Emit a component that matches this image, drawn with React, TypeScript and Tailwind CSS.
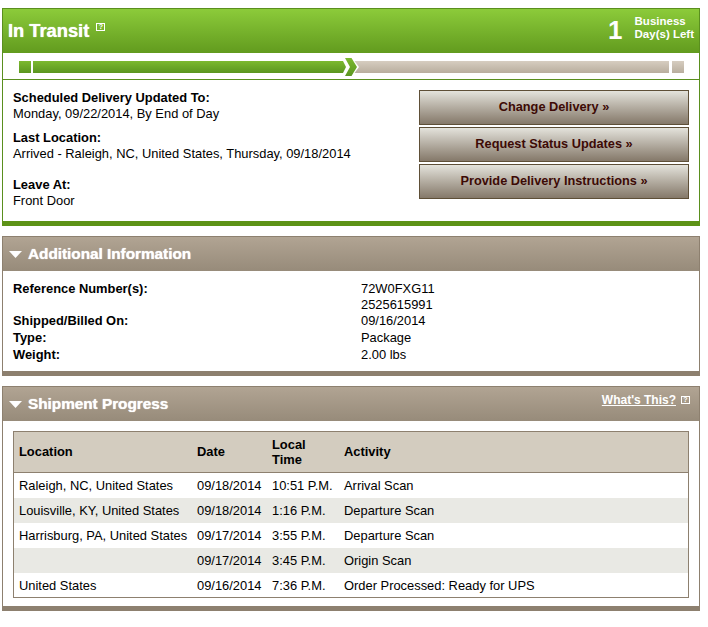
const rows = [
  { location: "Raleigh, NC, United States", date: "09/18/2014", time: "10:51 P.M.", activity: "Arrival Scan" },
  { location: "Louisville, KY, United States", date: "09/18/2014", time: "1:16 P.M.", activity: "Departure Scan" },
  { location: "Harrisburg, PA, United States", date: "09/17/2014", time: "3:55 P.M.", activity: "Departure Scan" },
  { location: "", date: "09/17/2014", time: "3:45 P.M.", activity: "Origin Scan" },
  { location: "United States", date: "09/16/2014", time: "7:36 P.M.", activity: "Order Processed: Ready for UPS" },
];

function HelpIcon() {
  return (
    <span className="inline-flex h-[8px] w-[9px] items-center justify-center border border-white text-[7px] leading-none font-bold text-white">
      ?
    </span>
  );
}

function Triangle() {
  return (
    <svg width="13" height="7" viewBox="0 0 13 7" className="shrink-0">
      <path d="M0 0H13L6.5 7Z" fill="#fff" />
    </svg>
  );
}

function Chevron() {
  return (
    <svg width="18" height="18" viewBox="0 0 18 18" className="shrink-0">
      <defs>
        <linearGradient id="beige" x1="0" y1="0" x2="0" y2="1">
          <stop offset="0" stopColor="#d6cdc0" />
          <stop offset="1" stopColor="#b9ae9e" />
        </linearGradient>
        <linearGradient id="green" x1="0" y1="0" x2="0" y2="1">
          <stop offset="0" stopColor="#7cb92f" />
          <stop offset="1" stopColor="#5b9620" />
        </linearGradient>
      </defs>
      <path d="M0 3L3 9L0 15Z" fill="url(#green)" />
      <path d="M2 0H8.5L14 9L8.5 18H2L7 9Z" fill="url(#green)" />
      <path d="M11.5 3H18V15H11.5L16 9Z" fill="url(#beige)" />
    </svg>
  );
}

function ActionButton({ label }: { label: string }) {
  return (
    <button className="h-[35px] w-[270px] border border-[#5e4f37] bg-gradient-to-b from-[#e4e3dc] to-[#85796a] pb-[2px] text-[12.75px] font-bold text-[#3d0a05]">
      {label} »
    </button>
  );
}

function SectionHeader({ title, right }: { title: string; right?: boolean }) {
  return (
    <div className="flex h-[34px] items-center justify-between bg-gradient-to-b from-[#b1a493] to-[#978b7a] pl-[6px] pr-[9px]">
      <div className="flex items-center gap-[6px]">
        <Triangle />
        <h2 className="text-[15.3px] font-bold text-white [text-shadow:0_0_1px_#fff]">{title}</h2>
      </div>
      {right && (
        <div className="mb-[9px] flex items-center gap-[5px]">
          <a className="text-[12px] font-bold text-white underline">What's This?</a>
          <HelpIcon />
        </div>
      )}
    </div>
  );
}

export default function App() {
  return (
    <div className="min-h-[627px] w-[708px] bg-white pl-[2px] pt-[8px] font-['Liberation_Sans',Arial,sans-serif] text-[12.9px] leading-[16px] text-black">
      <section className="w-[698px] border-x border-t border-[#5a8f1e]">
        <div className="flex h-[44px] items-center justify-between bg-gradient-to-b from-[#8ccb3a] to-[#629b1e] pl-[5px] pr-[5px]">
          <div className="flex items-start gap-[7px]">
            <h1 className="text-[18.3px] leading-[22px] font-bold text-white [text-shadow:0_0_1px_#fff]">In Transit</h1>
            <span className="-mt-[3px]">
              <HelpIcon />
            </span>
          </div>
          <div className="mb-[3px] flex items-center gap-[12px] text-white">
            <span className="text-[26px] leading-none font-bold">1</span>
            <span className="mb-[3px] text-[11.5px] leading-[13px] font-bold">
              Business
              <br />
              Day(s) Left
            </span>
          </div>
        </div>

        <div className="flex h-[27px] items-center border-b border-[#5a8f1e] pl-[16px] pt-[2px]">
          <div className="h-[12px] w-[12px] bg-gradient-to-b from-[#7cb92f] to-[#5b9620]" />
          <div className="ml-[2px] h-[12px] w-[310px] bg-gradient-to-b from-[#7cb92f] to-[#5b9620]" />
          <Chevron />
          <div className="h-[12px] w-[308px] bg-gradient-to-b from-[#d6cdc0] to-[#b9ae9e]" />
          <div className="ml-[3px] h-[12px] w-[12px] bg-gradient-to-b from-[#d6cdc0] to-[#b9ae9e]" />
        </div>

        <div className="flex h-[141px] justify-between pl-[10px] pr-[10px] pt-[10px]">
          <div className="flex flex-col">
            <p className="font-bold">Scheduled Delivery Updated To:</p>
            <p>Monday, 09/22/2014, By End of Day</p>
            <p className="mt-[8px] font-bold">Last Location:</p>
            <p>Arrived - Raleigh, NC, United States, Thursday, 09/18/2014</p>
            <p className="mt-[15px] font-bold">Leave At:</p>
            <p>Front Door</p>
          </div>
          <div className="flex flex-col gap-[2px]">
            <ActionButton label="Change Delivery" />
            <ActionButton label="Request Status Updates" />
            <ActionButton label="Provide Delivery Instructions" />
          </div>
        </div>
      </section>
      <div className="h-[5px] w-[698px] bg-[#5d9317]" />

      <section className="mt-[10px] w-[698px] border-x border-t border-[#8d806f]">
        <SectionHeader title="Additional Information" />
        <div className="grid h-[100px] grid-cols-[348px_1fr] content-start pl-[10px] pt-[10px]">
          <p className="font-bold">Reference Number(s):</p>
          <p>
            72W0FXG11
            <br />
            2525615991
          </p>
          <p className="font-bold">Shipped/Billed On:</p>
          <p>09/16/2014</p>
          <p className="mt-[1px] font-bold">Type:</p>
          <p className="mt-[1px]">Package</p>
          <p className="mt-[1px] font-bold">Weight:</p>
          <p className="mt-[1px]">2.00 lbs</p>
        </div>
      </section>
      <div className="h-[5px] w-[698px] bg-[#8d806f]" />

      <section className="mt-[10px] w-[698px] border-x border-t border-[#8d806f]">
        <SectionHeader title="Shipment Progress" right />
        <div className="h-[185px] pl-[10px] pt-[10px]">
          <table className="w-[676px] table-fixed border border-[#8d806f]">
            <thead>
              <tr className="h-[41px] border-b border-[#8d806f] bg-[#d3ccbf] text-left">
                <th className="w-[183.5px] pl-[5px]">Location</th>
                <th className="w-[75px]">Date</th>
                <th className="w-[72px] leading-[15px]">
                  Local
                  <br />
                  Time
                </th>
                <th>Activity</th>
              </tr>
            </thead>
            <tbody>
              {rows.map((r, i) => (
                <tr key={i} className={i % 2 === 1 ? "h-[25px] bg-[#e9e9e4]" : "h-[25px] bg-white"}>
                  <td className="pl-[5px] pt-[2px]">{r.location}</td>
                  <td className="pt-[2px]">{r.date}</td>
                  <td className="pt-[2px]">{r.time}</td>
                  <td className="pt-[2px]">{r.activity}</td>
                </tr>
              ))}
            </tbody>
          </table>
        </div>
      </section>
      <div className="h-[5px] w-[698px] bg-[#8d806f]" />
    </div>
  );
}
